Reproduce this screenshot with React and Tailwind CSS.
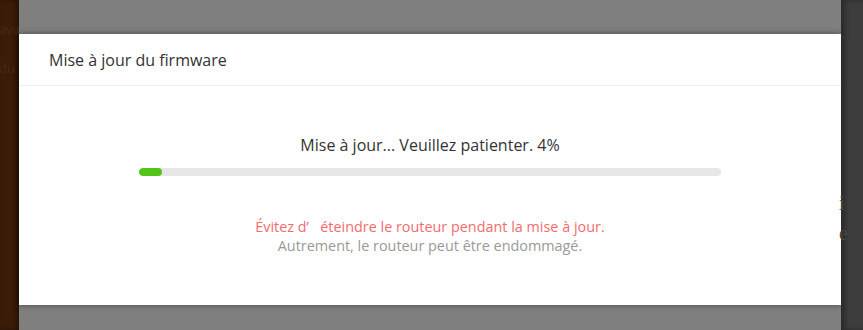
import React from "react";

function App() {
  const progress = 4;

  return (
    <div
      className="flex w-[863px] h-[330px] overflow-hidden"
      style={{ fontFamily: '"Open Sans", "Noto Sans", sans-serif' }}
    >
      {/* left sidebar behind mask */}
      <div className="w-[19px] bg-[#3a1c08] flex flex-col text-[13px] text-[#4a2a12] leading-none overflow-hidden shadow-[inset_-3px_0_4px_rgba(0,0,0,0.35)]">
        <span className="mt-[23px] -ml-[1px]">ava</span>
        <span className="mt-[26px] -ml-[1px]">du</span>
      </div>

      {/* masked page + dialog */}
      <div className="flex-1 bg-[#7f7f7f] flex flex-col pt-[34px]">
        <div className="bg-white h-[271px] shadow-[0_0_6px_rgba(0,0,0,0.45)] flex flex-col">
          <div className="h-[52px] px-[30px] flex items-center border-b border-[#efefef] text-[16px] text-[#333]">
            Mise à jour du firmware
          </div>

          <div className="flex flex-col items-center">
            <p className="mt-[49px] text-[16px] leading-[20px] text-[#333]">
              Mise à jour... Veuillez patienter. {progress}%
            </p>
            <div className="mt-[13px] w-[582px] h-[8px] rounded-full bg-[#e6e6e6] overflow-hidden">
              <div
                className="h-full rounded-full bg-[#52c41a]"
                style={{ width: `${Math.max(progress, 4)}%` }}
              />
            </div>
            <p className="mt-[42px] text-[14.4px] leading-[18px] text-[#f26c6c]">
              Évitez d’&nbsp;&nbsp;&nbsp;éteindre le routeur pendant la mise à jour.
            </p>
            <p className="mt-[1px] text-[14.4px] leading-[18px] text-[#999]">
              Autrement, le routeur peut être endommagé.
            </p>
          </div>
        </div>
      </div>

      {/* right panel behind mask */}
      <div className="w-[22px] bg-[#3d3d3d] shadow-[inset_4px_0_5px_rgba(0,0,0,0.3)] flex flex-col">
        <div className="h-[37px] w-[8px] border-r border-b border-[#34402a]" />
        <span
          className="mt-[156px] text-[20px] leading-none text-[#464646] -ml-[2px]"
          style={{ fontFamily: '"Liberation Serif", serif' }}
        >
          i
        </span>
        <span
          className="mt-[10px] text-[20px] leading-none text-[#464646] -ml-[2px]"
          style={{ fontFamily: '"Liberation Serif", serif' }}
        >
          e
        </span>
      </div>
    </div>
  );
}

export default App;
